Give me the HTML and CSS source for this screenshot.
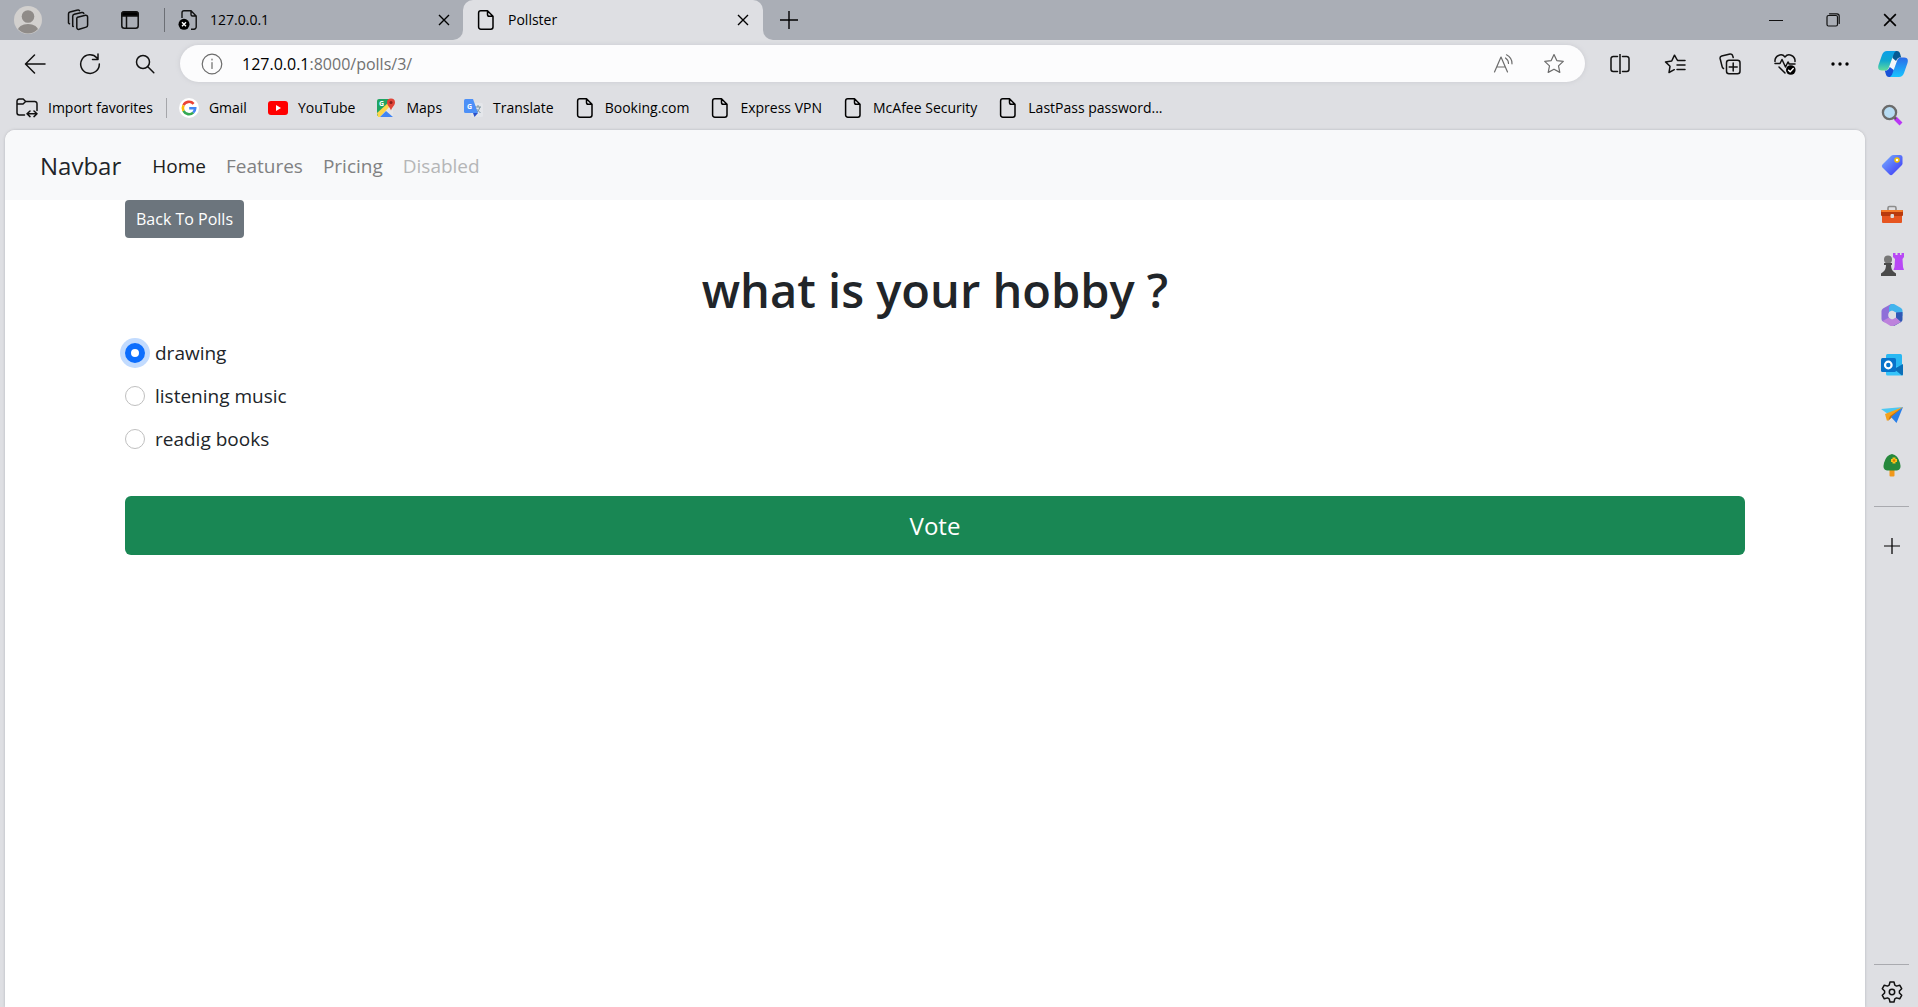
FILE: index.html
```html
<!DOCTYPE html>
<html lang="en">
<head>
<meta charset="utf-8">
<title>Pollster</title>
<link rel="stylesheet" href="styles.css">
</head>
<body>
<svg class="defs" aria-hidden="true">
  <symbol id="page" viewBox="0 0 20 20"><path d="M4.800.8h6.700L17 6.300V17a2.200 2.200 0 0 1-2.200 2.200h-10A2.200 2.200 0 0 1 2.600 17V3A2.200 2.200 0 0 1 4.800.8M11.500.8v3.700a1.800 1.800 0 0 0 1.800 1.800H17" fill="none" stroke="currentColor" stroke-width="1.500" stroke-linejoin="round"/></symbol>
  <symbol id="cross" viewBox="0 0 12 12"><path d="M1 1l10 10M11 1L1 11" fill="none" stroke="currentColor" stroke-width="1.400"/></symbol>
  <symbol id="plus" viewBox="0 0 18 18"><path d="M9 0v18M0 9h18" fill="none" stroke="currentColor" stroke-width="1.400"/></symbol>
</svg>

<header class="titlebar">
  <div class="strip strip-left">
    <button class="cell profile" aria-label="Profile"><svg width="28" height="28" viewBox="0 0 28 28"><clipPath id="face"><circle cx="14" cy="14" r="13.500"/></clipPath><circle cx="14" cy="14" r="14" fill="#d2d0ce"/><circle cx="14" cy="10.500" r="6.300" fill="#8f8b88"/><ellipse cx="14" cy="25" rx="10.500" ry="7" fill="#8f8b88" clip-path="url(#face)"/></svg></button>
    <button class="cell" aria-label="Workspaces"><svg class="line" width="22" height="22" viewBox="0 0 22 22"><path d="M10.600 8.200l7.800-1.900a1.800 1.800 0 0 1 2.200 1.700v8.200a2 2 0 0 1-1.400 1.900l-7 2.200a1.800 1.800 0 0 1-2.400-1.700v-8.300a2 2 0 0 1 .8-2.100zM6.300 17.500l-.6-.3V7.200a2 2 0 0 1 1.500-1.900l7.600-1.800a1.800 1.800 0 0 1 2 .9M2.500 14.800l-1-.8V4.700A2 2 0 0 1 3 2.900L10.600 1a1.800 1.800 0 0 1 1.900.6"/></svg></button>
    <button class="cell" aria-label="Tab actions"><svg class="line" width="18" height="18" viewBox="0 0 18 18"><rect x=".8" y=".8" width="16.400" height="16.400" rx="2.500"/><path d="M5.500 5v12"/><path d="M1 5V3a2 2 0 0 1 2-2h12a2 2 0 0 1 2 2v2z" fill="#000"/></svg></button>
    <div class="tab tab-idle">
      <svg width="20" height="20" viewBox="0 0 20 20"><path d="M4 8V2.700A2 2 0 0 1 6 .8h7l5.200 5.200v11a2.200 2.200 0 0 1-2.200 2.200h-3M13 .8v3.700A1.500 1.500 0 0 0 14.500 6h3.700" fill="none" stroke="#111" stroke-width="1.400"/><circle cx="6" cy="14.300" r="5.500"/><path d="M4 12.300l4 4M8 12.300l-4 4" stroke="#fff" stroke-width="1.400"/></svg>
      <span class="tab-title">127.0.0.1</span>
      <button class="tab-close" aria-label="Close tab"><svg width="12" height="12"><use href="#cross"/></svg></button>
    </div>
  </div>
  <div class="tab-frame">
    <div class="tab tab-active">
      <svg width="20" height="20"><use href="#page"/></svg>
      <span class="tab-title">Pollster</span>
      <button class="tab-close" aria-label="Close tab"><svg width="12" height="12"><use href="#cross"/></svg></button>
    </div>
  </div>
  <div class="strip strip-right">
    <button class="cell" aria-label="New tab"><svg width="18" height="18"><use href="#plus"/></svg></button>
    <div class="window-controls">
      <button aria-label="Minimize"><svg class="line thin" width="14" height="14" viewBox="0 0 14 14"><path d="M.5 7.500h13"/></svg></button>
      <button aria-label="Restore"><svg class="line thin" width="14" height="14" viewBox="0 0 14 14"><rect x="1" y="2.500" width="10.500" height="10.500" rx="1.500"/><path d="M3.500.8H11A2.300 2.300 0 0 1 13.200 3v7.500"/></svg></button>
      <button aria-label="Close"><svg width="14" height="14" viewBox="0 0 12 12"><use href="#cross"/></svg></button>
    </div>
  </div>
</header>

<div class="toolbar">
  <button class="cell" aria-label="Back"><svg class="line" width="22" height="20" viewBox="0 0 22 20"><path d="M21 10H2M10.500 1L1.500 10l9 9"/></svg></button>
  <button class="cell" aria-label="Refresh"><svg class="line" width="22" height="22" viewBox="0 0 22 22"><path d="M20.300 11A9.300 9.300 0 1 1 18 5M19 1v5.500h-5.500"/></svg></button>
  <button class="cell" aria-label="Search"><svg class="line" width="20" height="20" viewBox="0 0 20 20"><circle cx="8" cy="8" r="6.500"/><path d="M12.800 12.800l6 6"/></svg></button>
  <div class="address">
    <svg class="line grey thin" width="22" height="22" viewBox="0 0 22 22"><circle cx="11" cy="11" r="9.800"/><path d="M11 9.500v6M11 6v1"/></svg>
    <a class="url" href="#">127.0.0.1<span>:8000/polls/3/</span></a>
    <button aria-label="Read aloud"><svg class="line grey thin" width="22" height="20" viewBox="0 0 22 20"><path d="M1.500 18L8 3l6.500 15M4 13h8M12.500 4a7 7 0 0 1 3 5.500M13.500.8a10 10 0 0 1 5.500 9"/></svg></button>
    <button aria-label="Add to favorites"><svg class="line grey thin" width="22" height="22" viewBox="0 0 22 22"><path d="M11 1.600l2.800 6 6.500.8-4.800 4.500 1.300 6.500-5.800-3.200-5.800 3.200 1.300-6.500L1.700 8.400l6.500-.8z"/></svg></button>
  </div>
  <button class="cell" aria-label="Split screen"><svg class="line" width="20" height="20" viewBox="0 0 20 20"><path d="M7.500 2.500H3.200A2.200 2.200 0 0 0 1 4.700v10.600a2.200 2.200 0 0 0 2.200 2.200h4.300M12.500 2.500h4.300A2.200 2.200 0 0 1 19 4.700v10.600a2.200 2.200 0 0 1-2.200 2.200h-4.300M10 0v20"/></svg></button>
  <button class="cell" aria-label="Favorites"><svg class="line" width="22" height="20" viewBox="0 0 22 20"><path d="M13.500 6.500L10.500 1.200 7.700 7l-6.200.9L6 12.300l-1 6.200 5.300-2.800M14 6.500h7M13 11h8M13 15.500h8"/></svg></button>
  <button class="cell" aria-label="Collections"><svg class="line" width="22" height="22" viewBox="0 0 22 22"><path d="M4.500 15.500a2 2 0 0 1-1.300-1.600L1.100 5.500A2.200 2.200 0 0 1 2.700 3L11 1.100a2.200 2.200 0 0 1 2.700 1.600l.5 1.800"/><rect x="7.500" y="7.300" width="13.500" height="13.500" rx="2.500"/><path d="M14.200 10v8M10.200 14h8"/></svg></button>
  <button class="cell" aria-label="Browser essentials"><svg class="line" width="22" height="22" viewBox="0 0 22 22"><path d="M1 8.500C.5 3 7.500-.5 11 4c3.500-4.500 10.500-1 10 4.500M1 10.500h5l2-4 3.500 7.500 2.500-5 1.200 2H21M5 14l6 6"/><circle cx="16.800" cy="17" r="4.800" fill="#000" stroke="none"/><path d="M14.600 17.200l1.600 1.500 3-3.200" stroke="#fff"/></svg></button>
  <button class="cell" aria-label="Settings and more"><svg width="18" height="4" viewBox="0 0 18 4"><circle cx="2" cy="2" r="1.700"/><circle cx="9" cy="2" r="1.700"/><circle cx="16" cy="2" r="1.700"/></svg></button>
  <button class="cell copilot" aria-label="Copilot"><svg width="30" height="26" viewBox="0 0 30 26"><defs><linearGradient id="ca" x2="0" y2="1"><stop stop-color="#0c9fe8"/><stop offset=".5" stop-color="#12a8cf"/><stop offset="1" stop-color="#5fdc9c"/></linearGradient><linearGradient id="cb" x2="0" y2="1"><stop stop-color="#2c6be8"/><stop offset="1" stop-color="#18c4ff"/></linearGradient></defs><path d="M15 5L11 16l4 5 4-11z" fill="#f2f6fa"/><path d="M14 0h5q2.500 0 3.200 3l1 3.500h-2Q19 7 18 10l-3.500-3z" fill="#075a94"/><path d="M16 26h-5q-2.500 0-3.200-3l-1-3.500h2q2-.5 3-3.500l4 3z" fill="#1852d8"/><path d="M9 0h9q-2 1-3 5l-4 11q-1 3.500-4 3.500H4Q-1 19.500.5 14L4 4Q5.500 0 9 0z" fill="url(#ca)"/><path d="M21 26h-9q2-1 3-5l4-11q1-3.500 4-3.500h3q5 0 3.500 5.500L26 22q-1.500 4-5 4z" fill="url(#cb)"/></svg></button>
</div>

<div class="workspace">
  <div class="content">
    <nav class="favorites" aria-label="Favorites bar">
      <a class="import" href="#"><svg class="line" width="22" height="20" viewBox="0 0 22 20"><path d="M8.500 17H3.200A2.200 2.200 0 0 1 1 14.800V3.200A2.200 2.200 0 0 1 3.200 1h4l2.500 2.500h9A2.200 2.200 0 0 1 21 5.700v6.800M1 6h6l2.700-2.500M11.500 15.800h9M14 13l-3 2.800 3 2.800M18 13l3 2.800-3 2.800"/></svg>Import favorites</a>
      <a href="#"><svg width="20" height="20" viewBox="0 0 20 20"><circle cx="10" cy="10" r="10" fill="#fff"/><g fill="none" stroke-width="2.600"><path d="M14.600 5.800A6.200 6.200 0 0 0 4.500 7.300" stroke="#ea4335"/><path d="M4.500 7.300a6.200 6.200 0 0 0 0 5.600" stroke="#fbbc05"/><path d="M4.500 12.900a6.200 6.200 0 0 0 9.700 1.700" stroke="#34a853"/><path d="M14.200 14.600q2-1.800 2-4.300h-6" stroke="#4285f4"/></g></svg>Gmail</a>
      <a href="#"><svg width="20" height="20" viewBox="0 0 20 20"><rect y="3" width="20" height="14" rx="3" fill="#f00"/><path d="M8 7l5 3-5 3z" fill="#fff"/></svg>YouTube</a>
      <a href="#"><svg width="20" height="20" viewBox="0 0 20 20"><path d="M1 3q0-2 2-2h14v18H3q-2 0-2-2z" fill="#e6e6e6"/><path d="M1 3q0-2 2-2h10v7L1 18z" fill="#1fa463"/><path d="M1 15L12 5l2 3L4 19H2z" fill="#fdd64b"/><path d="M4 19l6-6 7 6z" fill="#4285f4"/><text x="3" y="8" class="glyph">G</text><path d="M15 12.500C14 9 11 7.500 11 4.500a4 4 0 0 1 8 0C19 7.500 16 9 15 12.500z" fill="#e04438"/><circle cx="15" cy="4.500" r="1.500" fill="#8c1d18"/></svg>Maps</a>
      <a href="#"><svg width="20" height="20" viewBox="0 0 20 20"><rect x="8" y="5" width="12" height="14" rx="1.500" fill="#e4e6ea"/><path d="M12 9h6M15 7v2M17 9q-1 4-4 6M13.500 11l4 4" stroke="#7b93a0" fill="none"/><path d="M2.500 1H10l5 14H2.500Q1 15 1 13.500v-11Q1 1 2.500 1z" fill="#4d90f7"/><path d="M10 15h5l-3.500 4z" fill="#2b50c8"/><text x="4" y="11" class="glyph">G</text></svg>Translate</a>
      <a href="#"><svg width="20" height="20"><use href="#page"/></svg>Booking.com</a>
      <a href="#"><svg width="20" height="20"><use href="#page"/></svg>Express VPN</a>
      <a href="#"><svg width="20" height="20"><use href="#page"/></svg>McAfee Security</a>
      <a href="#"><svg width="20" height="20"><use href="#page"/></svg>LastPass password...</a>
    </nav>

    <div class="page">
      <nav class="navbar">
        <a class="brand" href="#">Navbar</a>
        <a class="nav-link current" href="#">Home</a>
        <a class="nav-link" href="#">Features</a>
        <a class="nav-link" href="#">Pricing</a>
        <a class="nav-link disabled" aria-disabled="true" href="#">Disabled</a>
      </nav>
      <main class="container">
        <a class="back" href="#">Back To Polls</a>
        <h1>what is your hobby ?</h1>
        <form>
          <div class="choice"><input type="radio" name="choice" id="choice1" checked><label for="choice1">drawing</label></div>
          <div class="choice"><input type="radio" name="choice" id="choice2"><label for="choice2">listening music</label></div>
          <div class="choice"><input type="radio" name="choice" id="choice3"><label for="choice3">readig books</label></div>
          <button class="vote" type="submit">Vote</button>
        </form>
      </main>
    </div>
  </div>

  <aside class="sidebar">
    <button aria-label="Search"><svg width="22" height="22" viewBox="0 0 22 22"><path d="M14 14l6 6" stroke="#b936f5" stroke-width="4"/><path d="M12.500 12.500l2.500 2.500" stroke="#555" stroke-width="2"/><circle cx="8.500" cy="8.500" r="6.600" fill="#b7dcf3" stroke="#6b6b6b" stroke-width="2.300"/></svg></button>
    <button aria-label="Shopping"><svg width="22" height="22" viewBox="0 0 22 22"><defs><linearGradient id="tg" x2="1" y2="1"><stop stop-color="#79b4ff"/><stop offset="1" stop-color="#392ff5"/></linearGradient></defs><path d="M12.500 1H19q2.500 0 2.500 2.500v6q0 1-1 2l-9 9q-1.500 1.500-3 0l-7-7q-1.500-1.500 0-3l8.500-8.500q1-1 2.500-1z" fill="url(#tg)"/><circle cx="16" cy="6" r="2" fill="#fff" stroke="#f5c400" stroke-width="1.500"/></svg></button>
    <button aria-label="Tools"><svg width="24" height="22" viewBox="0 0 24 22"><path d="M8 7V4q0-1.500 1.500-1.500h5Q16 2.500 16 4v3" fill="none" stroke="#8c8c8c" stroke-width="1.600"/><rect x="2" y="8" width="20" height="11" rx="1" fill="#e65520"/><rect x="1" y="6" width="22" height="6" rx="1" fill="#b83a0d"/><rect x="1" y="6" width="22" height="2" rx="1" fill="#f47a28"/><rect x="10.500" y="10" width="3.500" height="4" rx="1" fill="#ddd"/></svg></button>
    <button aria-label="Games"><svg width="24" height="24" viewBox="0 0 24 24"><path d="M13 0h2.500v2h2V0H20v2h1.500V0H24v4l-1.500 2 .5 8 1 3H13.500l1-3 .5-8-2-2z" fill="#b848f5"/><circle cx="8" cy="6.500" r="4" fill="#777"/><path d="M4 10h8v2h-1q0 5 3 7l2 1.500V23H1v-2.500L3 19q3-2 3-7H4z" fill="#4a4a4a"/></svg></button>
    <button aria-label="Microsoft 365"><svg width="22" height="22" viewBox="0 0 22 22"><path d="M10 0L2 4.500Q.5 5.500.5 7v8q0 1.500 1.500 2.500l2 1L8 16V6.500L13 3.500V1z" fill="#8f6fd8"/><path d="M10 0h3l7 4q1.500 1 1.500 2.500V12L15 8.500 11 6.500 8 8V3z" fill="#42b4ed"/><path d="M21.500 8v7.500q0 1.500-1.500 2.500l-7 4h-2v-4l4-4V8.500z" fill="#3158b4"/><path d="M1.500 17L8 13.500l3 2 4-2 5 4.500-7.500 4h-3z" fill="#bd82dc"/><circle cx="11" cy="11" r="3.800" fill="#dedfe3"/></svg></button>
    <button aria-label="Outlook"><svg width="22" height="22" viewBox="0 0 22 22"><rect x="5" y="0" width="16" height="14" rx="1.500" fill="#28b8f3"/><path d="M5 12h17v8q0 1.500-1.500 1.500h-14Q5 21.500 5 20z" fill="#35c4fa"/><path d="M22 10v10q0 1-1 1.500L13 15z" fill="#0b6fb8"/><rect y="4" width="15" height="14" rx="1.500" fill="#0873ca"/><circle cx="7.300" cy="11" r="3.300" fill="none" stroke="#fff" stroke-width="2.200"/></svg></button>
    <button aria-label="Drop"><svg width="24" height="22" viewBox="0 0 24 22"><path d="M1 5l22-2-15 7z" fill="#4cc8f2"/><path d="M23 3L5 10l2 7z" fill="#f4a11c"/><path d="M23 3L8 17l2-5z" fill="#cc7309"/><path d="M23 3L11 13l5.500 6z" fill="#287fe9"/></svg></button>
    <button aria-label="Tree"><svg width="20" height="24" viewBox="0 0 20 24"><rect x="7.500" y="16" width="5" height="7.500" rx="1" fill="#f0981b"/><path d="M10 1q6 1 8 9 2 7-3 7.500H5Q0 17 2 10q2-8 8-9z" fill="#26883c"/><path d="M12 4.500v6M9 7.500h6" stroke="#fbc21a" stroke-width="3"/><circle cx="12" cy="7.500" r="1.200" fill="#d87a00"/></svg></button>
    <hr>
    <button class="add" aria-label="Customize"><svg width="16" height="16" viewBox="0 0 18 18"><use href="#plus"/></svg></button>
    <div class="sidebar-end">
      <hr>
      <button aria-label="Settings"><svg class="line" width="22" height="22" viewBox="0 0 22 22"><path d="M9 1h4l.8 3.100 1.700 1 3.200-.9 2 3.500L18.400 10v2l2.300 2.300-2 3.500-3.200-.9-1.700 1L13 21H9l-.8-3.100-1.700-1-3.200.9-2-3.500L3.600 12v-2L1.300 7.700l2-3.500 3.200.9 1.700-1z"/><circle cx="11" cy="11" r="2.700"/></svg></button>
    </div>
  </aside>
</div>
</body>
</html>
```
FILE: styles.css
```css
* { box-sizing: border-box; }
body {
  margin: 0;
  min-height: 100vh;
  display: flex;
  flex-direction: column;
  background: #dedfe3;
  color: #000;
  font: 14px/20px "Open Sans", "Noto Sans", sans-serif;
}
button {
  display: flex;
  align-items: center;
  justify-content: center;
  padding: 0;
  border: 0;
  background: none;
  color: inherit;
  font: inherit;
}
a { color: inherit; text-decoration: none; }
svg { flex: none; display: block; }
.defs { width: 0; height: 0; position: absolute; }
.line { fill: none; stroke: #111; stroke-width: 1.5; stroke-linejoin: round; stroke-linecap: round; }
.line.thin { stroke-width: 1.2; }
.line.grey { stroke: #6b6b6b; }
.glyph { font: bold 7px "Open Sans", sans-serif; fill: #fff; }
.cell { width: 55px; flex: none; }

/* Title bar and tabs */
.titlebar { display: flex; height: 40px; }
.strip { display: flex; background: #aaaeb6; }
.strip-left { width: 463px; border-bottom-right-radius: 10px; }
.strip-left .cell { width: 52px; }
.strip-left .profile { padding-left: 4px; }
.strip-right { flex: 1; border-bottom-left-radius: 10px; }
.strip-right .cell { width: 52px; }
.tab { display: flex; align-items: center; gap: 12px; }
.tab-title { flex: 1; }
.tab-close { width: 20px; height: 20px; }
.tab-idle {
  flex: 1;
  margin: 8px 9px 8px 8px;
  padding-left: 13px;
  border-left: 1px solid #6c6f75;
}
.tab-frame { width: 300px; background: linear-gradient(#aaaeb6 20px, #dedfe3 20px); }
.tab-active {
  height: 40px;
  padding: 0 10px 0 13px;
  border-radius: 10px 10px 0 0;
  background: #dedfe3;
}
.window-controls { display: flex; margin-left: auto; }
.window-controls button { width: 57px; }

/* Toolbar */
.toolbar { display: flex; height: 50px; padding: 0 0 2px 7px; }
.address {
  flex: 1;
  display: flex;
  align-items: center;
  height: 37px;
  margin: 5px 7px 0 8px;
  padding: 0 6px 0 21px;
  border-radius: 19px;
  background: #fcfcfd;
  box-shadow: 0 0 5px #c9cacf;
  font-size: 16px;
}
.address button { width: 50px; }
.url { flex: 1; padding-left: 19px; }
.url span { color: #717171; }
.toolbar .copilot { width: 51px; }

/* Favorites, page and sidebar */
.workspace { flex: 1; display: flex; }
.content { flex: 1; display: flex; flex-direction: column; padding-left: 5px; }
.favorites { display: flex; align-items: center; gap: 21px; height: 40px; padding: 0 0 4px 11px; }
.favorites a { display: flex; align-items: center; gap: 10px; }
.favorites .import { padding-right: 13px; margin-right: -9px; border-right: 1px solid #a5a6aa; }
.page {
  flex: 1;
  border-radius: 10px 10px 0 0;
  background: #fff;
  box-shadow: 0 0 3px #b4b5ba;
  color: #212529;
  font-size: 19px;
  line-height: 30px;
  overflow: hidden;
}
.navbar { display: flex; align-items: center; height: 70px; padding: 1px 35px 0; background: #f8f9fa; }
.brand { margin-right: 21px; font-size: 24px; }
.nav-link { padding: 0 10px; color: #808182; }
.current { color: #1b1c1c; }
.disabled { color: #b5b6b7; }
.container { max-width: 1650px; margin: 0 auto; padding: 0 15px; }
.back {
  display: inline-block;
  padding: 4px 11px;
  border-radius: 4px;
  background: #6c757d;
  color: #fff;
  font-size: 16px;
}
h1 { margin: 22px 0 18px; text-align: center; font-size: 47px; line-height: 60px; font-weight: 600; }
.choice { display: flex; align-items: center; gap: 10px; margin-bottom: 13px; }
.choice input {
  appearance: none;
  width: 20px;
  height: 20px;
  margin: 0;
  border: 1px solid #bfbfbf;
  border-radius: 50%;
  background: #fff;
}
.choice input:checked {
  border: 6px solid #0d6efd;
  box-shadow: 0 0 0 5px #c2dbfe;
}
.vote {
  width: 100%;
  height: 59px;
  margin-top: 42px;
  border-radius: 6px;
  background: #198754;
  color: #fff;
  font-size: 24px;
}
.sidebar { width: 53px; display: flex; flex-direction: column; align-items: center; }
.sidebar button { width: 50px; height: 50px; }
.sidebar hr { width: 35px; height: 1px; margin: 16px 0 14px; border: 0; background: #a9aaaf; }
.sidebar-end { margin-top: auto; display: flex; flex-direction: column; align-items: center; }
.sidebar-end hr { margin: 0 0 12px; }
.sidebar-end button { height: 30px; }
```
